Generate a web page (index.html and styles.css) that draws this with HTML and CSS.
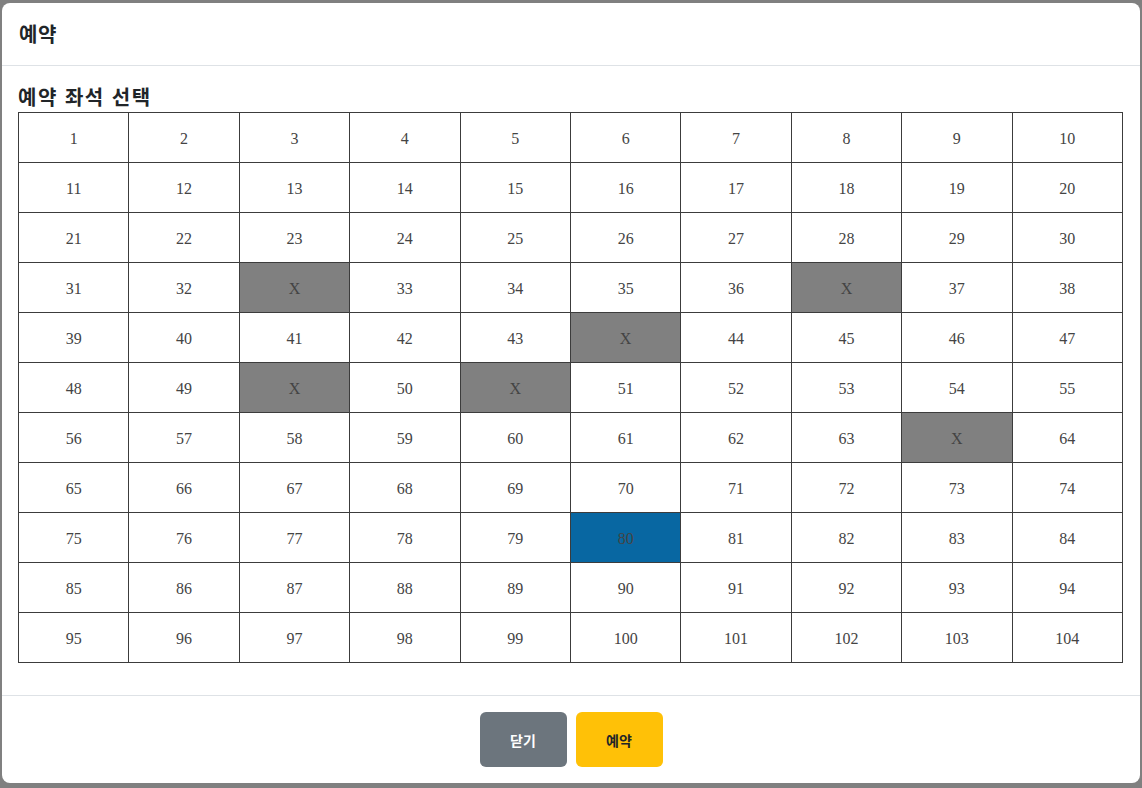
FILE: index.html
```html
<!DOCTYPE html>
<html lang="ko">
<head>
<meta charset="utf-8">
<title>예약</title>
<link rel="stylesheet" href="styles.css">
</head>
<body>
<div class="backdrop">
  <div class="modal">
    <div class="modal-header">
      <h1 class="modal-title">예약</h1>
    </div>
    <div class="modal-body">
      <h2 class="section-title">예약 좌석 선택</h2>
      <table class="seats">
        <tbody>
          <tr><td>1</td><td>2</td><td>3</td><td>4</td><td>5</td><td>6</td><td>7</td><td>8</td><td>9</td><td>10</td></tr>
          <tr><td>11</td><td>12</td><td>13</td><td>14</td><td>15</td><td>16</td><td>17</td><td>18</td><td>19</td><td>20</td></tr>
          <tr><td>21</td><td>22</td><td>23</td><td>24</td><td>25</td><td>26</td><td>27</td><td>28</td><td>29</td><td>30</td></tr>
          <tr><td>31</td><td>32</td><td class="taken">X</td><td>33</td><td>34</td><td>35</td><td>36</td><td class="taken">X</td><td>37</td><td>38</td></tr>
          <tr><td>39</td><td>40</td><td>41</td><td>42</td><td>43</td><td class="taken">X</td><td>44</td><td>45</td><td>46</td><td>47</td></tr>
          <tr><td>48</td><td>49</td><td class="taken">X</td><td>50</td><td class="taken">X</td><td>51</td><td>52</td><td>53</td><td>54</td><td>55</td></tr>
          <tr><td>56</td><td>57</td><td>58</td><td>59</td><td>60</td><td>61</td><td>62</td><td>63</td><td class="taken">X</td><td>64</td></tr>
          <tr><td>65</td><td>66</td><td>67</td><td>68</td><td>69</td><td>70</td><td>71</td><td>72</td><td>73</td><td>74</td></tr>
          <tr><td>75</td><td>76</td><td>77</td><td>78</td><td>79</td><td class="selected">80</td><td>81</td><td>82</td><td>83</td><td>84</td></tr>
          <tr><td>85</td><td>86</td><td>87</td><td>88</td><td>89</td><td>90</td><td>91</td><td>92</td><td>93</td><td>94</td></tr>
          <tr><td>95</td><td>96</td><td>97</td><td>98</td><td>99</td><td>100</td><td>101</td><td>102</td><td>103</td><td>104</td></tr>
        </tbody>
      </table>
    </div>
    <div class="modal-footer">
      <button class="btn btn-secondary" type="button">닫기</button>
      <button class="btn btn-warning" type="button">예약</button>
    </div>
  </div>
</div>
</body>
</html>
```

FILE: styles.css
```css
* { box-sizing: border-box; }
html, body {
  margin: 0;
  padding: 0;
  height: 100%;
}
body {
  background: #808080;
  font-family: "Noto Sans CJK KR", "Noto Sans", sans-serif;
  color: #212529;
}
.backdrop {
  padding: 3px 2px 5px 2px;
  height: 100%;
}
.modal {
  background: #fff;
  border-radius: 8px;
  height: 780px;
  display: flex;
  flex-direction: column;
}
.modal-header {
  padding: 16px 17px;
  border-bottom: 1px solid #dee2e6;
}
.modal-title {
  margin: 0;
  font-size: 20px;
  line-height: 30px;
  font-weight: 700;
  letter-spacing: 0.5px;
  color: #212529;
}
.modal-body {
  padding: 16px 16px 16px 16px;
}
.section-title {
  margin: 0;
  font-size: 20px;
  line-height: 30px;
  font-weight: 700;
  letter-spacing: 1.5px;
  color: #212529;
}
.seats {
  width: 1105px;
  border-collapse: collapse;
  table-layout: fixed;
  margin-bottom: 16px;
  font-family: "Liberation Serif", serif;
  font-size: 16px;
  color: #444;
}
.seats td {
  border: 1px solid #3c3c3c;
  height: 50px;
  padding: 2px 0 0 0;
  text-align: center;
  vertical-align: middle;
}
.seats td.taken {
  background: #808080;
}
.seats td.selected {
  background: #0867a2;
}
.modal-footer {
  margin-top: auto;
  border-top: 1px solid #dee2e6;
  padding: 16px 0 16px 0;
  display: flex;
  justify-content: center;
  gap: 9px;
}
.btn {
  width: 87px;
  height: 55px;
  border: none;
  border-radius: 6px;
  font-family: "Noto Sans CJK KR", "Noto Sans", sans-serif;
  font-size: 14px;
  font-weight: 700;
  padding: 0;
}
.btn-secondary {
  background: #6c757d;
  color: #fff;
}
.btn-warning {
  background: #ffc107;
  color: #212529;
}
```
